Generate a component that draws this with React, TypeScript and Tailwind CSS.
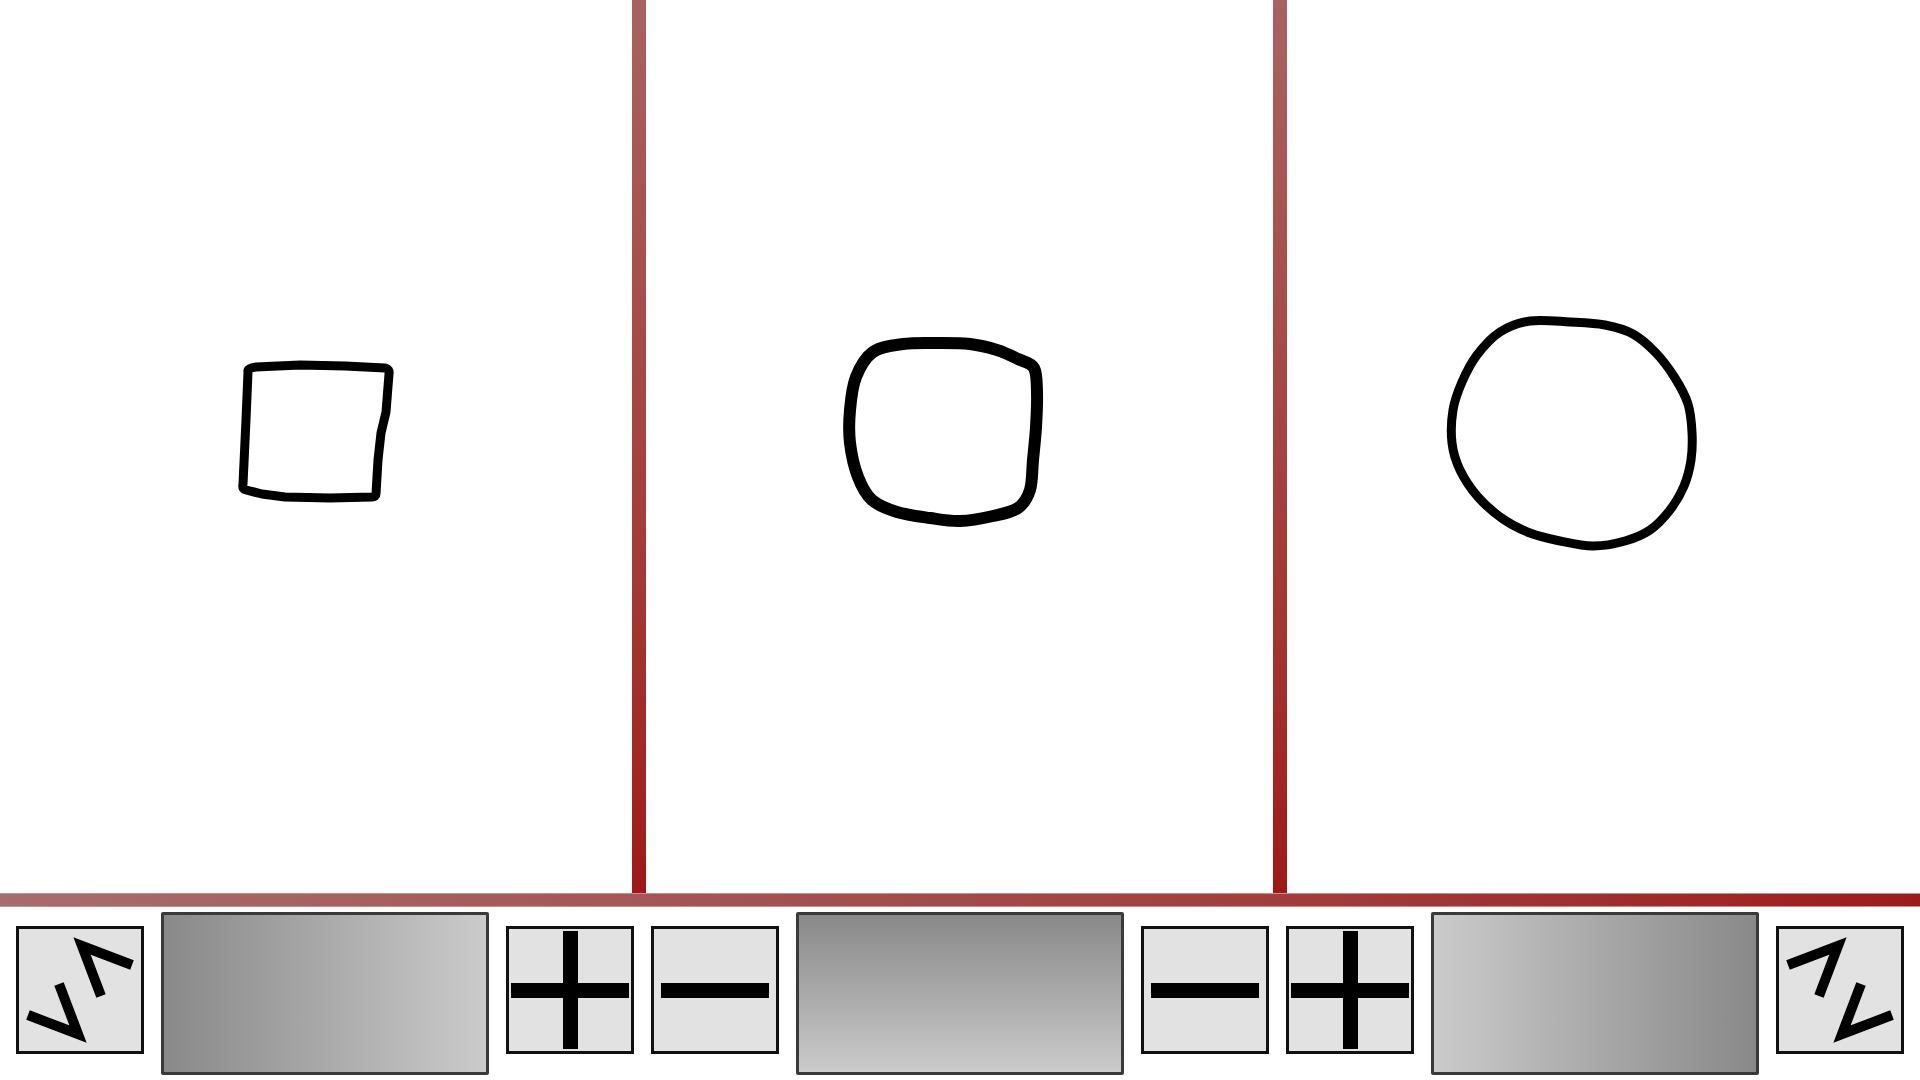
type Pt = [number, number];

// closed Catmull-Rom spline through the points, as cubic beziers
function smooth(points: Pt[]): string {
  const n = points.length;
  const p = (i: number) => points[(i + n) % n];
  let d = `M${points[0][0]} ${points[0][1]}`;
  for (let i = 0; i < n; i++) {
    const p0 = p(i - 1);
    const p1 = p(i);
    const p2 = p(i + 1);
    const p3 = p(i + 2);
    const c1x = p1[0] + (p2[0] - p0[0]) / 6;
    const c1y = p1[1] + (p2[1] - p0[1]) / 6;
    const c2x = p2[0] - (p3[0] - p1[0]) / 6;
    const c2y = p2[1] - (p3[1] - p1[1]) / 6;
    d += ` C${c1x} ${c1y} ${c2x} ${c2y} ${p2[0]} ${p2[1]}`;
  }
  return d + ' Z';
}

const squarePath =
  'M248 372 Q247 368 256 367 L300 365 L345 366 L385 368 Q390 369 389 374 L386 412 L381 433 L378 460 L376 494 Q376 497 372 497 L330 498 L285 497 L262 494 L246 490 Q242 489 243 484 L246 420 Z';

const blobPoints: Pt[] = [
  [873, 352], [903, 344], [937, 343], [970, 344], [997, 350], [1018, 359], [1034, 368],
  [1037, 393], [1036, 427], [1033, 460], [1030, 490], [1018, 508],
  [993, 516], [960, 521], [930, 518], [897, 512], [872, 500],
  [858, 477], [850, 443], [850, 410], [856, 377],
];

const circlePoints: Pt[] = [
  [1530, 321], [1570, 322], [1605, 325], [1633, 334], [1656, 353], [1675, 378],
  [1688, 404], [1692, 432], [1691, 460], [1684, 486], [1670, 510], [1650, 530],
  [1625, 541], [1593, 546], [1560, 541], [1530, 533], [1503, 519], [1478, 497],
  [1460, 470], [1452, 443], [1453, 410], [1462, 382], [1477, 355], [1500, 332],
];

function Canvas({ x0, w, children }: { x0: number; w: number; children: React.ReactNode }) {
  return (
    <svg
      className="absolute inset-0 h-full w-full"
      viewBox={`${x0} 0 ${w} 893`}
      preserveAspectRatio="none"
      fill="none"
      stroke="#000"
      strokeLinejoin="round"
      strokeLinecap="round"
    >
      {children}
    </svg>
  );
}

function Divider() {
  return <div className="w-[14px] shrink-0 bg-gradient-to-b from-[#a86262] to-[#9f1717]" />;
}

function Tool({ children }: { children: React.ReactNode }) {
  return (
    <div className="mt-[14px] h-[128px] w-[128px] shrink-0 border-[3px] border-[#111] bg-[#e2e2e2]">
      <svg className="h-full w-full" viewBox="3 3 122 122" fill="#000" stroke="#000">
        {children}
      </svg>
    </div>
  );
}

function Zigzag({ flip }: { flip?: boolean }) {
  return (
    <g
      transform={flip ? 'translate(128 0) scale(-1 1)' : undefined}
      fill="none"
      strokeWidth={10}
      strokeLinejoin="miter"
      strokeLinecap="butt"
    >
      <polyline points="116,39 66,20 85,70" />
      <polyline points="12,89 62,108 43,58" />
    </g>
  );
}

function Plus() {
  return (
    <g stroke="none">
      <rect x={5} y={57} width={118} height={15} />
      <rect x={57} y={5} width={15} height={118} />
    </g>
  );
}

function Minus() {
  return <rect x={10} y={57} width={108} height={15} stroke="none" />;
}

function Slider({ dir }: { dir: 'r' | 'b' | 'l' }) {
  const grad =
    dir === 'r'
      ? 'bg-gradient-to-r from-[#898989] to-[#cbcbcb]'
      : dir === 'b'
        ? 'bg-gradient-to-b from-[#898989] to-[#cbcbcb]'
        : 'bg-gradient-to-l from-[#898989] to-[#cbcbcb]';
  return <div className={`h-[163px] w-[328px] shrink-0 rounded-[2px] border-[3px] border-[#3a3a3a] ${grad}`} />;
}

export default function App() {
  return (
    <div className="flex h-[1080px] w-[1920px] flex-col overflow-hidden bg-white">
      {/* drawing panels */}
      <div className="flex h-[893px] shrink-0">
        <div className="relative w-[632px] shrink-0">
          <Canvas x0={0} w={632}>
            <path d={squarePath} strokeWidth={9} />
          </Canvas>
        </div>
        <Divider />
        <div className="relative w-[627px] shrink-0">
          <Canvas x0={646} w={627}>
            <path d={smooth(blobPoints)} strokeWidth={12} />
          </Canvas>
        </div>
        <Divider />
        <div className="relative flex-1">
          <Canvas x0={1287} w={633}>
            <path d={smooth(circlePoints)} strokeWidth={9} />
          </Canvas>
        </div>
      </div>

      <div className="h-[14px] shrink-0 border-y border-[#c49090] bg-gradient-to-r from-[#a86c6c] via-[#a34a4a] to-[#9e1a1a]" />

      {/* controls */}
      <div className="flex flex-1 items-start gap-[17px] pl-4 pt-[5px]">
        <Tool>
          <Zigzag />
        </Tool>
        <Slider dir="r" />
        <Tool>
          <Plus />
        </Tool>
        <Tool>
          <Minus />
        </Tool>
        <Slider dir="b" />
        <Tool>
          <Minus />
        </Tool>
        <Tool>
          <Plus />
        </Tool>
        <Slider dir="l" />
        <Tool>
          <Zigzag flip />
        </Tool>
      </div>
    </div>
  );
}
